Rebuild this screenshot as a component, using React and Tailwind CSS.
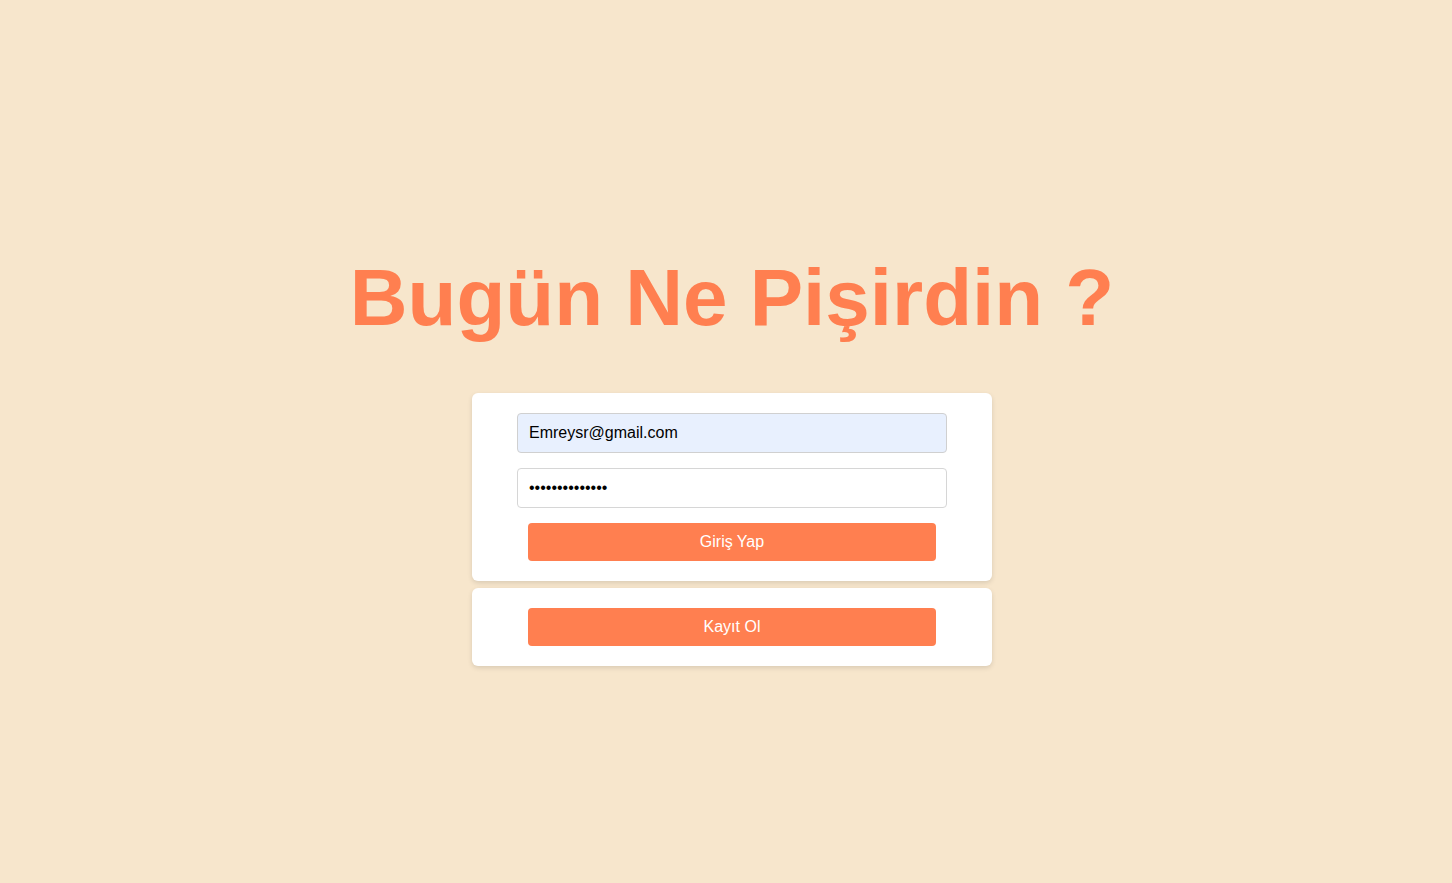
import React, { useState } from 'react';

const LoginPage = () => {
  const [email, setEmail] = useState('Emreysr@gmail.com');
  const [password, setPassword] = useState('12345678901234');

  return (
    <div className="min-h-screen w-full bg-[#f7e6cc] pl-3 font-['Liberation_Sans',Arial,sans-serif]">
      <div className="flex flex-col items-center pt-[252px]">
        <h1 className="text-[80px] font-bold leading-[92px] text-[#ff7f50]">Bugün Ne Pişirdin ?</h1>

        <div className="mt-[49px] flex flex-col gap-[7px]">
          <form
            onSubmit={e => e.preventDefault()}
            className="flex w-[520px] flex-col items-center gap-[15px] rounded-md bg-white py-5 shadow-[0_2px_5px_rgba(0,0,0,0.12)]"
          >
            <input
              type="email"
              value={email}
              onChange={e => setEmail(e.target.value)}
              className="h-10 w-[430px] rounded border border-[#d0d0d0] bg-[#e8f0fe] px-[11px] text-base text-black outline-none"
            />
            <input
              type="password"
              value={password}
              onChange={e => setPassword(e.target.value)}
              className="h-10 w-[430px] rounded border border-[#d6d6d6] bg-white px-[11px] text-base text-black outline-none"
            />
            <button type="submit" className="h-[38px] w-[408px] rounded bg-[#ff7f50] text-base text-white">
              Giriş Yap
            </button>
          </form>

          <div className="flex w-[520px] justify-center rounded-md bg-white py-5 shadow-[0_2px_5px_rgba(0,0,0,0.12)]">
            <button type="button" className="h-[38px] w-[408px] rounded bg-[#ff7f50] text-base text-white">
              Kayıt Ol
            </button>
          </div>
        </div>
      </div>
    </div>
  );
};

export default LoginPage;
